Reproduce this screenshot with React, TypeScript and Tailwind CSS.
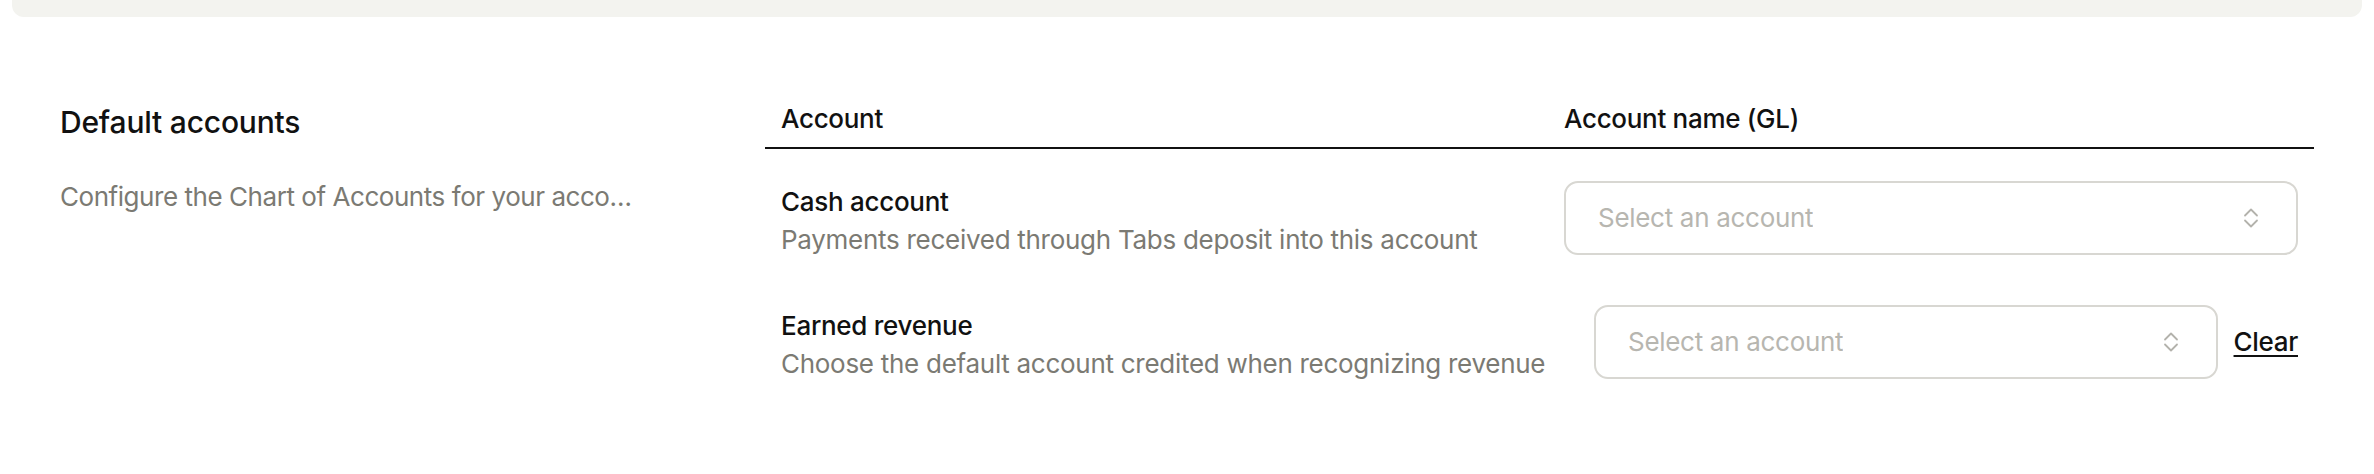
import React from "react";

function UpDownIcon() {
  return (
    <svg width="16" height="22" viewBox="0 0 16 22" fill="none" className="shrink-0 text-[#b3b2ac]">
      <path d="M2 8.5 L8 2.5 L14 8.5" stroke="currentColor" strokeWidth="1.8" strokeLinecap="round" strokeLinejoin="round" />
      <path d="M2 13.5 L8 19.5 L14 13.5" stroke="currentColor" strokeWidth="1.8" strokeLinecap="round" strokeLinejoin="round" />
    </svg>
  );
}

function AccountSelect() {
  return (
    <button
      type="button"
      className="flex h-[74px] w-full min-w-0 items-center justify-between rounded-[14px] border-2 border-[#d8d7d2] bg-white pl-[32px] pr-[37px] text-left"
    >
      <span className="truncate text-[26px] leading-[36px] tracking-[-0.3px] text-[#b7b6b0]">Select an account</span>
      <UpDownIcon />
    </button>
  );
}

interface Row {
  label: string;
  description: string;
  clearable: boolean;
}

const rows: Row[] = [
  {
    label: "Cash account",
    description: "Payments received through Tabs deposit into this account",
    clearable: false,
  },
  {
    label: "Earned revenue",
    description: "Choose the default account credited when recognizing revenue",
    clearable: true,
  },
];

export default function App() {
  return (
    <div className="min-h-[474px] bg-white font-['Inter','Liberation_Sans',sans-serif] text-[#111111]">
      {/* bottom of the card above */}
      <div className="mx-3 h-[17px] rounded-b-xl bg-[#f3f3ef]" />

      <section className="flex px-[60px] pt-[84px]">
        {/* Left description */}
        <div className="w-[705px] shrink-0">
          <h2 className="mt-[3px] text-[30px] font-medium leading-[36px] tracking-[-0.2px]">Default accounts</h2>
          <p className="mt-[39px] whitespace-nowrap text-[26px] leading-[36px] tracking-[-0.45px] text-[#7b7a73]">
            Configure the Chart of Accounts for your acco…
          </p>
        </div>

        {/* Table */}
        <div className="min-w-0 flex-1">
          <div className="grid grid-cols-[783px_1fr] border-b-2 border-[#111111] pb-[10px]">
            <div className="pl-4 text-[26px] font-medium leading-[36px] tracking-[-0.3px]">Account</div>
            <div className="px-4 text-[26px] font-medium leading-[36px] tracking-[-0.3px]">Account name (GL)</div>
          </div>

          <div className="pt-[7px]">
            {rows.map((row) => (
              <div
                key={row.label}
                className={
                  row.clearable
                    ? "grid h-[124px] grid-cols-[829px_1fr] items-center"
                    : "grid h-[124px] grid-cols-[783px_1fr] items-center"
                }
              >
                <div className="whitespace-nowrap pl-4 pt-[5px] tracking-[-0.28px]">
                  <div className="text-[26px] font-medium leading-[38px]">{row.label}</div>
                  <div className="text-[26px] leading-[38px] text-[#7b7a73]">{row.description}</div>
                </div>
                <div className={row.clearable ? "flex items-center gap-4 pr-4" : "flex items-center px-4"}>
                  <AccountSelect />
                  {row.clearable && (
                    <button
                      type="button"
                      className="text-[26px] font-medium leading-[36px] tracking-[-0.3px] underline underline-offset-4"
                    >
                      Clear
                    </button>
                  )}
                </div>
              </div>
            ))}
          </div>
        </div>
      </section>
    </div>
  );
}
